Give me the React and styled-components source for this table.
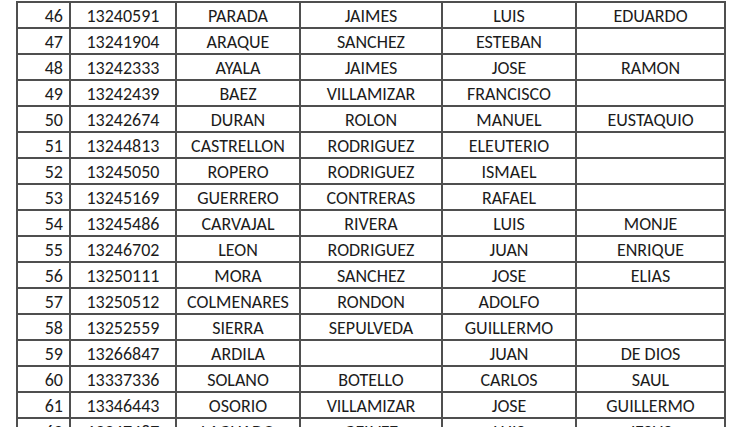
import React from 'react';
import styled, { createGlobalStyle } from 'styled-components';

const GlobalStyle = createGlobalStyle`
    html, body {
        margin: 0;
        padding: 0;
        background: #ffffff;
        overflow: hidden;
    }
`

const rows = [
    ['46', '13240591', 'PARADA', 'JAIMES', 'LUIS', 'EDUARDO'],
    ['47', '13241904', 'ARAQUE', 'SANCHEZ', 'ESTEBAN', ''],
    ['48', '13242333', 'AYALA', 'JAIMES', 'JOSE', 'RAMON'],
    ['49', '13242439', 'BAEZ', 'VILLAMIZAR', 'FRANCISCO', ''],
    ['50', '13242674', 'DURAN', 'ROLON', 'MANUEL', 'EUSTAQUIO'],
    ['51', '13244813', 'CASTRELLON', 'RODRIGUEZ', 'ELEUTERIO', ''],
    ['52', '13245050', 'ROPERO', 'RODRIGUEZ', 'ISMAEL', ''],
    ['53', '13245169', 'GUERRERO', 'CONTRERAS', 'RAFAEL', ''],
    ['54', '13245486', 'CARVAJAL', 'RIVERA', 'LUIS', 'MONJE'],
    ['55', '13246702', 'LEON', 'RODRIGUEZ', 'JUAN', 'ENRIQUE'],
    ['56', '13250111', 'MORA', 'SANCHEZ', 'JOSE', 'ELIAS'],
    ['57', '13250512', 'COLMENARES', 'RONDON', 'ADOLFO', ''],
    ['58', '13252559', 'SIERRA', 'SEPULVEDA', 'GUILLERMO', ''],
    ['59', '13266847', 'ARDILA', '', 'JUAN', 'DE DIOS'],
    ['60', '13337336', 'SOLANO', 'BOTELLO', 'CARLOS', 'SAUL'],
    ['61', '13346443', 'OSORIO', 'VILLAMIZAR', 'JOSE', 'GUILLERMO'],
    ['62', '13347487', 'LAGUADO', 'GELVEZ', 'LUIS', 'JESUS'],
]

const App = () => {
    return (<Page>
        <GlobalStyle />
        <Sheet>
            {rows.map((row) => row.map((value, i) => (
                <Cell key={`${row[0]}-${i}`} $right={i === 0}>{value}</Cell>
            )))}
        </Sheet>
    </Page>
    )
}

const Page = styled.div`
    width: 747px;
    height: 427px;
    overflow: hidden;
    padding: 1px 0 0 16px;
    box-sizing: border-box;
`

const Sheet = styled.div`
    display: grid;
    grid-template-columns: 51px 104px 122px 140px 132px 147px;
    grid-auto-rows: 24px;
    gap: 2px;
    padding: 2px;
    width: max-content;
    background: #4f4f4f;
`

const Cell = styled.div`
    background: #ffffff;
    display: flex;
    align-items: center;
    justify-content: ${p => p.$right ? 'flex-end' : 'center'};
    padding: 2px ${p => p.$right ? '6px' : '0'} 0 0;
    box-sizing: border-box;
    font-family: Carlito, Lato, "Open Sans", sans-serif;
    font-size: 18px;
    color: #1c1c1c;
    white-space: nowrap;
    overflow: hidden;
`

export default App;
